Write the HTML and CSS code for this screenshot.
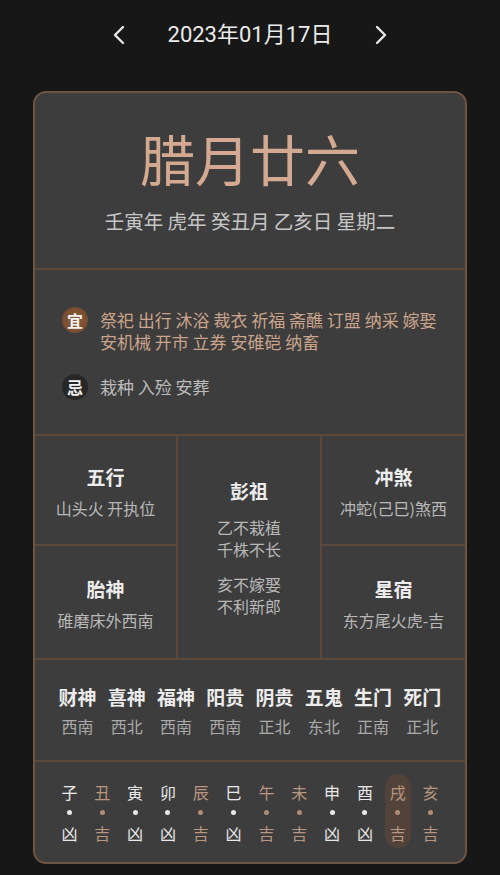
FILE: index.html
```html
<!DOCTYPE html>
<html lang="zh-CN">
<head>
<meta charset="utf-8">
<title>黄历</title>
<link rel="stylesheet" href="styles.css">
</head>
<body>
<header class="nav">
  <svg class="arrow" width="14" height="20" viewBox="0 0 14 20"><path d="M11 2 L3 10 L11 18" fill="none" stroke="#e8e8e8" stroke-width="2.4" stroke-linecap="round" stroke-linejoin="round"/></svg>
  <div class="date">2023年01月17日</div>
  <svg class="arrow" width="14" height="20" viewBox="0 0 14 20"><path d="M3 2 L11 10 L3 18" fill="none" stroke="#e8e8e8" stroke-width="2.4" stroke-linecap="round" stroke-linejoin="round"/></svg>
</header>

<main class="card">
  <section class="top">
    <div class="lunar">腊月廿六</div>
    <div class="ganzhi">壬寅年 虎年 癸丑月 乙亥日 星期二</div>
  </section>

  <section class="yiji">
    <div class="yj-row">
      <span class="badge yi">宜</span>
      <p class="yj-text gold">祭祀 出行 沐浴 裁衣 祈福 斋醮 订盟 纳采 嫁娶 安机械 开市 立券 安碓硙 纳畜</p>
    </div>
    <div class="yj-row ji-row">
      <span class="badge ji">忌</span>
      <p class="yj-text grey">栽种 入殓 安葬</p>
    </div>
  </section>

  <section class="grid">
    <div class="cell c1">
      <div class="ctitle">五行</div>
      <div class="csub">山头火 开执位</div>
    </div>
    <div class="cell mid">
      <div class="ctitle">彭祖</div>
      <div class="pz">
        <div class="pz-group"><div class="pz-line">乙不栽植</div><div class="pz-line">千株不长</div></div>
        <div class="pz-group"><div class="pz-line">亥不嫁娶</div><div class="pz-line">不利新郎</div></div>
      </div>
    </div>
    <div class="cell c3">
      <div class="ctitle">冲煞</div>
      <div class="csub">冲蛇(己巳)煞西</div>
    </div>
    <div class="cell c4">
      <div class="ctitle">胎神</div>
      <div class="csub">碓磨床外西南</div>
    </div>
    <div class="cell c6">
      <div class="ctitle">星宿</div>
      <div class="csub">东方尾火虎-吉</div>
    </div>
  </section>

  <section class="gods">
    <div class="god"><div class="gt">财神</div><div class="gs">西南</div></div>
    <div class="god"><div class="gt">喜神</div><div class="gs">西北</div></div>
    <div class="god"><div class="gt">福神</div><div class="gs">西南</div></div>
    <div class="god"><div class="gt">阳贵</div><div class="gs">西南</div></div>
    <div class="god"><div class="gt">阴贵</div><div class="gs">正北</div></div>
    <div class="god"><div class="gt">五鬼</div><div class="gs">东北</div></div>
    <div class="god"><div class="gt">生门</div><div class="gs">正南</div></div>
    <div class="god"><div class="gt">死门</div><div class="gs">正北</div></div>
  </section>

  <section class="hours">
    <div class="hr"><span class="hn">子</span><i class="dot"></i><span class="hl">凶</span></div>
    <div class="hr good"><span class="hn">丑</span><i class="dot"></i><span class="hl">吉</span></div>
    <div class="hr"><span class="hn">寅</span><i class="dot"></i><span class="hl">凶</span></div>
    <div class="hr"><span class="hn">卯</span><i class="dot"></i><span class="hl">凶</span></div>
    <div class="hr good"><span class="hn">辰</span><i class="dot"></i><span class="hl">吉</span></div>
    <div class="hr"><span class="hn">巳</span><i class="dot"></i><span class="hl">凶</span></div>
    <div class="hr good"><span class="hn">午</span><i class="dot"></i><span class="hl">吉</span></div>
    <div class="hr good"><span class="hn">未</span><i class="dot"></i><span class="hl">吉</span></div>
    <div class="hr"><span class="hn">申</span><i class="dot"></i><span class="hl">凶</span></div>
    <div class="hr"><span class="hn">酉</span><i class="dot"></i><span class="hl">凶</span></div>
    <div class="hr good on"><span class="hn">戌</span><i class="dot"></i><span class="hl">吉</span></div>
    <div class="hr good"><span class="hn">亥</span><i class="dot"></i><span class="hl">吉</span></div>
  </section>
</main>
</body>
</html>
```

FILE: styles.css
```css
* { box-sizing: border-box; }
html, body {
  margin: 0;
  padding: 0;
  background: #171717;
}
body {
  font-family: "Noto Sans CJK SC", "Noto Sans", sans-serif;
  color: #e6e6e6;
  width: 500px;
  height: 875px;
  overflow: hidden;
}
.nav {
  height: 70px;
  display: flex;
  align-items: center;
  justify-content: center;
  gap: 42px;
}
.date {
  font-family: Roboto, "Noto Sans CJK SC", sans-serif;
  font-size: 22px;
  color: #ebebeb;
  line-height: 28px;
}
.arrow { display: block; }

.card {
  width: 434px;
  margin: 21px auto 0;
  background: #3d3d3d;
  border: 2px solid #6e5443;
  border-radius: 13px;
  overflow: hidden;
}
.top {
  border-bottom: 2px solid #5c4839;
  padding: 32px 0 34px;
  text-align: center;
}
.lunar {
  font-size: 55px;
  line-height: 64px;
  color: #d3a991;
}
.ganzhi {
  margin-top: 19px;
  font-size: 19.5px;
  line-height: 26px;
  color: #c6c6c6;
}

.yiji {
  border-bottom: 2px solid #5c4839;
  padding: 39px 20px 34px 27px;
}
.yj-row {
  display: flex;
  align-items: flex-start;
  gap: 12px;
}
.ji-row { margin-top: 23px; }
.badge {
  flex: none;
  width: 26px;
  height: 26px;
  margin-top: -2px;
  border-radius: 50%;
  display: flex;
  align-items: center;
  justify-content: center;
  font-size: 16px;
  font-weight: 700;
  color: #f2f2f2;
}
.badge.yi { background: radial-gradient(circle at 50% 50%, #8d5d3d 0%, #6f4529 100%); }
.badge.ji { background: #272727; }
.yj-text {
  margin: 0;
  font-size: 17px;
  line-height: 22px;
}
.gold { color: #cba48b; }
.grey { color: #bdbdbd; }

.grid {
  display: grid;
  grid-template-columns: 143px 144px 143px;
  grid-template-rows: 110px 112px;
  border-bottom: 2px solid #5c4839;
}
.cell {
  display: flex;
  flex-direction: column;
  align-items: center;
  justify-content: center;
  padding-top: 4px;
}
.c1 { grid-column: 1; grid-row: 1; border-right: 2px solid #5c4839; border-bottom: 2px solid #5c4839; }
.mid { grid-column: 2; grid-row: 1 / 3; border-right: 2px solid #5c4839; padding-top: 0; }
.c3 { grid-column: 3; grid-row: 1; border-bottom: 2px solid #5c4839; }
.c4 { grid-column: 1; grid-row: 2; border-right: 2px solid #5c4839; }
.c6 { grid-column: 3; grid-row: 2; }
.ctitle {
  font-size: 19px;
  line-height: 26px;
  font-weight: 700;
  color: #ececec;
}
.csub {
  margin-top: 6px;
  font-size: 16px;
  line-height: 24px;
  color: #b8b8b8;
}
.pz {
  margin-top: 12px;
  display: flex;
  flex-direction: column;
  gap: 13px;
  text-align: center;
}
.pz-line {
  font-size: 16px;
  line-height: 22px;
  color: #b8b8b8;
}

.gods {
  display: grid;
  grid-template-columns: repeat(8, 1fr);
  padding: 24px 18px 23px;
  border-bottom: 2px solid #5c4839;
}
.god { text-align: center; }
.gt {
  font-size: 19px;
  line-height: 26px;
  font-weight: 700;
  color: #ececec;
}
.gs {
  margin-top: 5px;
  font-size: 16px;
  line-height: 22px;
  color: #aaaaaa;
}

.hours {
  display: grid;
  grid-template-columns: repeat(12, 1fr);
  padding: 12px 18px 14px;
}
.hr {
  width: 26px;
  justify-self: center;
  display: flex;
  flex-direction: column;
  align-items: center;
  padding: 8px 0 5px;
  border-radius: 13px;
  color: #e8e8e8;
}
.hr.good { color: #b8967f; }
.hr.on { background: #51433a; }
.hn, .hl {
  font-size: 16px;
  line-height: 20px;
}
.dot {
  display: block;
  width: 5px;
  height: 5px;
  border-radius: 50%;
  background: currentColor;
  margin: 8px 0;
}
.hr.good .dot { background: #b08c74; }
```
